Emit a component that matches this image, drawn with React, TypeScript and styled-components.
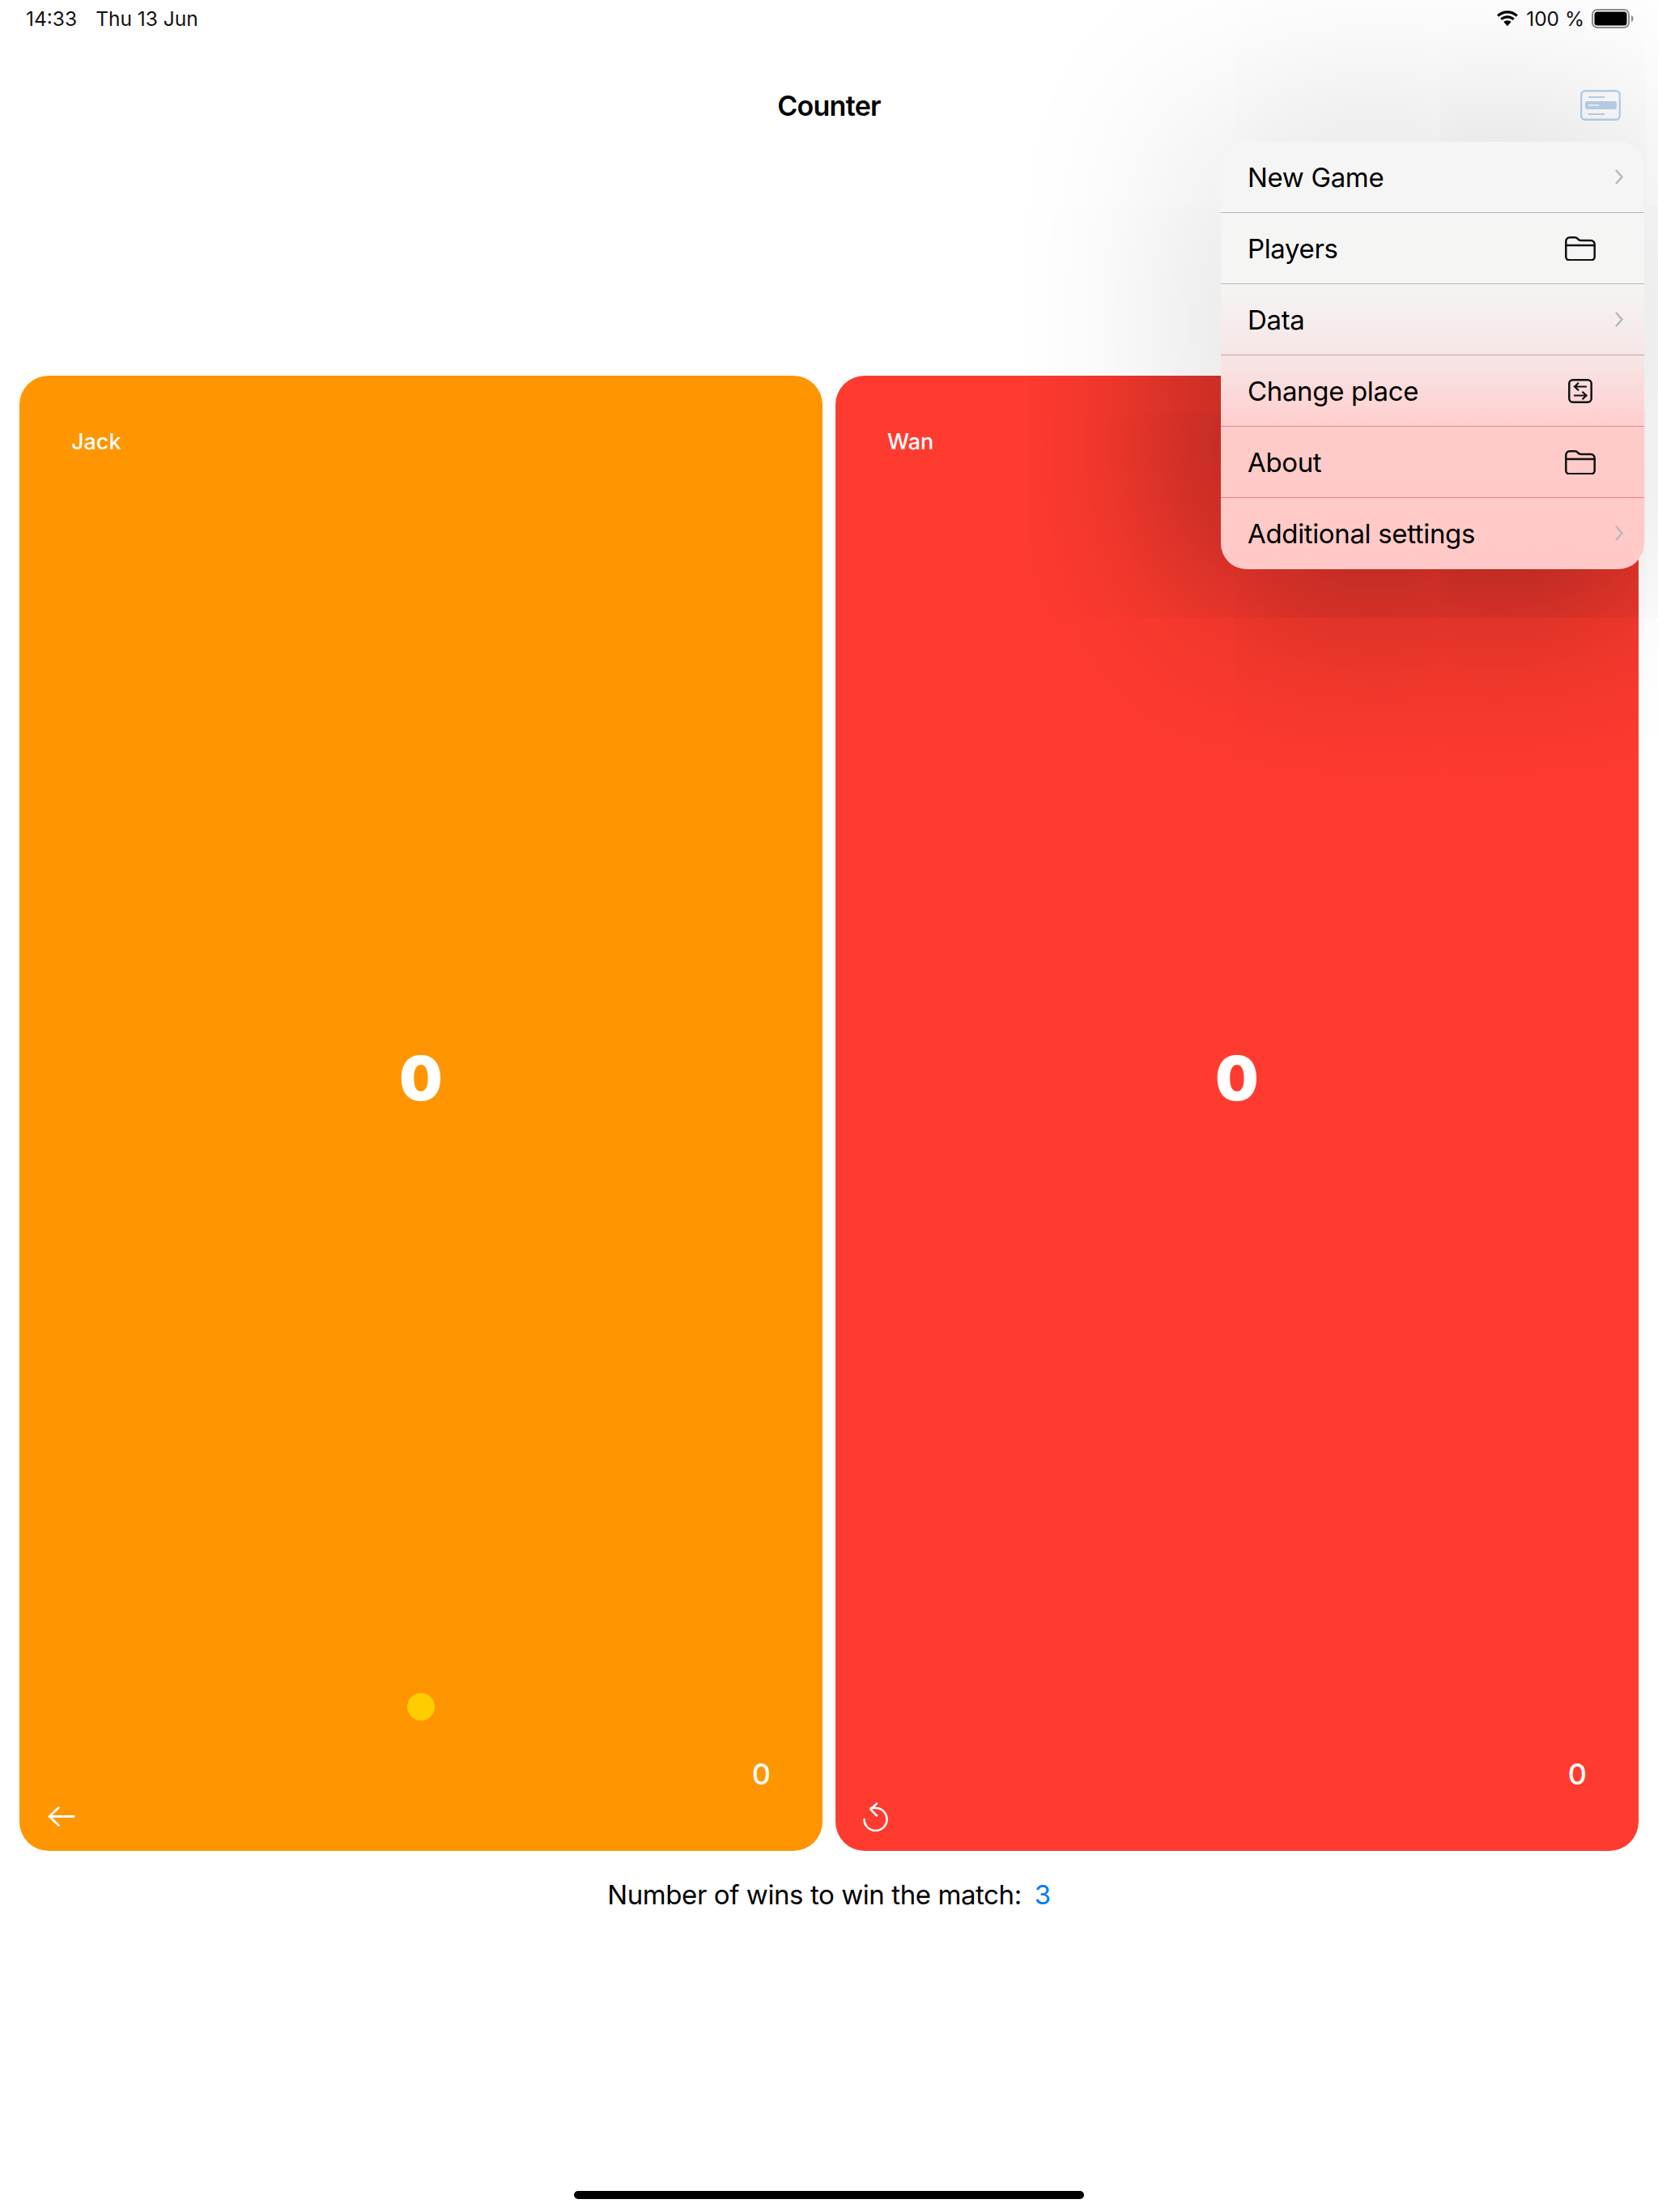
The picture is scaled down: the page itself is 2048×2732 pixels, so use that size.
import React from "react";
import styled, { createGlobalStyle } from "styled-components";

const GlobalStyle = createGlobalStyle`
  html, body {
    margin: 0;
    padding: 0;
    background: #fff;
  }
  body {
    font-family: "Inter", "Liberation Sans", sans-serif;
    color: #000;
  }
`;

const Page = styled.div`
  position: relative;
  width: 2048px;
  height: 2732px;
  display: flex;
  flex-direction: column;
  overflow: hidden;
`;

const StatusBar = styled.div`
  height: 46px;
  display: flex;
  align-items: center;
  justify-content: space-between;
  padding: 0 30px 0 32px;
  font-size: 24.5px;
  color: #111;
`;

const StatusGroup = styled.div<{ $gap: number }>`
  display: flex;
  align-items: center;
  gap: ${(p) => p.$gap}px;
`;

const NavBar = styled.div`
  height: 168px;
  margin-bottom: 250px;
  display: grid;
  grid-template-columns: minmax(0, 1fr) auto minmax(0, 1fr);
  align-items: center;
  padding: 0 46px;
`;

const Title = styled.div`
  grid-column: 2;
  font-size: 34px;
  font-weight: 600;
  letter-spacing: -0.7px;
`;

const NavAction = styled.div`
  grid-column: 3;
  display: flex;
  justify-content: flex-end;
`;

const Boards = styled.div`
  height: 1822px;
  padding: 0 24px;
  display: grid;
  grid-template-columns: 992px 992px;
  column-gap: 16px;
`;

const Card = styled.div<{ $color: string }>`
  position: relative;
  overflow: hidden;
  display: flex;
  flex-direction: column;
  border-radius: 36px;
  background: ${(p) => p.$color};
  color: #fff;
`;

// menu shadow falls harder on the red card than on the white page
const CardShade = styled.div`
  position: absolute;
  left: 476px;
  top: -289px;
  width: 523px;
  height: 528px;
  border-radius: 32px;
  box-shadow: 0 0 240px 20px rgba(0, 0, 0, 0.42);
`;

const PlayerName = styled.div`
  padding: 64px 0 0 64px;
  font-size: 27px;
  line-height: 36px;
  font-weight: 500;
`;

const ScoreArea = styled.div`
  flex: 1;
  padding-top: 7px;
  display: flex;
  align-items: center;
  justify-content: center;
  font-size: 75px;
  font-weight: 900;
`;

const Dot = styled.div<{ $visible?: boolean }>`
  align-self: center;
  width: 34px;
  height: 34px;
  border-radius: 50%;
  background: ${(p) => (p.$visible ? "#ffcc00" : "transparent")};
`;

const SetScore = styled.div`
  margin-top: 46px;
  padding-right: 64px;
  text-align: right;
  font-size: 36px;
  line-height: 40px;
  font-weight: 500;
`;

const CardFooter = styled.div`
  margin: 15px 0 24px;
  padding-left: 34px;
  height: 36px;
  display: flex;
`;

const Caption = styled.div`
  margin-top: 33px;
  display: flex;
  justify-content: center;
  gap: 16px;
  font-size: 33px;
  line-height: 42px;
  letter-spacing: -0.42px;
`;

const WinTarget = styled.span`
  color: #007aff;
`;

const HomeIndicator = styled.div`
  margin: auto auto 16px;
  width: 630px;
  height: 10px;
  border-radius: 5px;
  background: #000;
`;

const MenuShadow = styled.div`
  position: absolute;
  top: 175px;
  left: 1508px;
  width: 523px;
  height: 528px;
  border-radius: 32px;
  box-shadow: 0 0 240px 20px rgba(0, 0, 0, 0.17);
`;

const Menu = styled.div`
  position: absolute;
  top: 175px;
  left: 1508px;
  width: 523px;
  height: 528px;
  border-radius: 32px;
  overflow: hidden;
  background: linear-gradient(
    to bottom,
    #f5f5f5 0,
    #f5f5f4 170px,
    #f6e6e6 265px,
    #fdd4d3 330px,
    #ffcbc9 360px,
    #ffc9c7 100%
  );
`;

const MenuRow = styled.div<{ $line?: string }>`
  box-sizing: border-box;
  height: 88px;
  padding-left: 33px;
  display: flex;
  align-items: center;
  justify-content: space-between;
  border-bottom: 1px solid ${(p) => p.$line || "transparent"};
  font-size: 33px;
  letter-spacing: -0.35px;
  color: #000;
`;

const RowIcon = styled.div<{ $right: number }>`
  display: flex;
  margin-right: ${(p) => p.$right}px;
`;

const WifiIcon = () => (
  <svg width="28" height="20" viewBox="0 0 28 20" fill="#000">
    <path d="M14 3.4c4.1 0 7.9 1.600 10.700 4.300l2.200-2.300C23.500 2.100 19 .2 14 .2S4.500 2.100 1.100 5.400l2.200 2.300C6.100 5 9.900 3.400 14 3.400z" />
    <path d="M14 9.400c2.500 0 4.800.9 6.600 2.600l2.200-2.300C20.500 7.600 17.400 6.300 14 6.300S7.500 7.600 5.200 9.700L7.400 12c1.800-1.700 4.100-2.600 6.600-2.600z" />
    <path d="M14 12.300c-1.800 0-3.400.7-4.600 1.800l4.600 5.100 4.600-5.100c-1.200-1.100-2.800-1.800-4.600-1.800z" />
  </svg>
);

const BatteryIcon = () => (
  <svg width="52" height="24" viewBox="0 0 52 24">
    <rect x="1" y="1" width="45" height="22" rx="6" fill="none" stroke="#8e8e8e" strokeWidth="2" />
    <rect x="3.500" y="3.500" width="40" height="17" rx="3.500" fill="#000" />
    <path d="M49 8v8c1.600-.5 2.600-2.200 2.600-4S50.600 8.500 49 8z" fill="#8e8e8e" />
  </svg>
);

const SidebarIcon = () => (
  <svg width="50" height="38" viewBox="0 0 50 38">
    <rect x="1.200" y="1.200" width="47.600" height="35.600" rx="5" fill="none" stroke="#bcd4ee" strokeWidth="2.400" />
    <rect x="6" y="14" width="39" height="10" rx="2.500" fill="#bcd4ee" />
    <path d="M10 9h20M10 30h20" stroke="#bcd4ee" strokeWidth="2" />
    <path d="M10 19h13" stroke="#f4f4f4" strokeWidth="2" />
  </svg>
);

const FolderIcon = () => (
  <svg width="38" height="30" viewBox="0 0 38 30" fill="none" stroke="#111" strokeWidth="2.500">
    <path d="M1.300 6a4.700 4.700 0 0 1 4.700-4.700h6.500c1.700 0 2.500.8 3.500 1.900s1.800 1.900 3.500 1.900H32a4.700 4.700 0 0 1 4.700 4.700v15.500a4 4 0 0 1-4 4H5.300a4 4 0 0 1-4-4z" />
    <path d="M1.300 11h35.400" />
  </svg>
);

const SwapIcon = () => (
  <svg width="30" height="30" viewBox="0 0 30 30" fill="none" stroke="#111" strokeWidth="2.500">
    <rect x="1.300" y="1.300" width="27.400" height="27.400" rx="4.500" />
    <path d="M23 9.500H8M13 4.800L8 9.500l5 4.700M7 20.500h15.500M17.500 15.800l5 4.700-5 4.700" strokeWidth="2.200" />
  </svg>
);

const ChevronIcon = () => (
  <svg width="10" height="19" viewBox="0 0 10 19" fill="none" stroke="#b9b9b9" strokeWidth="2.600">
    <path d="M1 1l7.500 8.500L1 18" />
  </svg>
);

const BackIcon = () => (
  <svg width="36" height="36" viewBox="0 0 36 36" fill="none" stroke="#fff" strokeWidth="2.800" strokeLinecap="round" strokeLinejoin="round">
    <path d="M33 17.500H3M14.500 6.500L3 17.500l11.500 11" />
  </svg>
);

const RestartIcon = () => (
  <svg width="36" height="36" viewBox="0 0 36 36" fill="none" stroke="#fff" strokeWidth="2.600" strokeLinecap="round" strokeLinejoin="round">
    <path d="M1.500 21a14 14 0 1 0 14-14H10" />
    <path d="M17 1.500L9.500 8.800 17 16.500" />
  </svg>
);

const menuItems = [
  { label: "New Game", icon: <ChevronIcon />, right: 26, line: "#b8b8b8" },
  { label: "Players", icon: <FolderIcon />, right: 60, line: "#b8b8b8" },
  { label: "Data", icon: <ChevronIcon />, right: 26, line: "#c9a3a2" },
  { label: "Change place", icon: <SwapIcon />, right: 64, line: "#e88685" },
  { label: "About", icon: <FolderIcon />, right: 60, line: "#e88685" },
  { label: "Additional settings", icon: <ChevronIcon />, right: 26 },
];

export default function App() {
  return (
    <Page>
      <GlobalStyle />
      <StatusBar>
        <StatusGroup $gap={23}>
          <span>14:33</span>
          <span>Thu 13 Jun</span>
        </StatusGroup>
        <StatusGroup $gap={9}>
          <WifiIcon />
          <span>100 %</span>
          <BatteryIcon />
        </StatusGroup>
      </StatusBar>

      <NavBar>
        <Title>Counter</Title>
        <NavAction>
          <SidebarIcon />
        </NavAction>
      </NavBar>

      <Boards>
        <Card $color="#ff9500">
          <PlayerName>Jack</PlayerName>
          <ScoreArea>0</ScoreArea>
          <Dot $visible />
          <SetScore>0</SetScore>
          <CardFooter>
            <BackIcon />
          </CardFooter>
        </Card>
        <Card $color="#ff3b30">
          <CardShade />
          <PlayerName>Wan</PlayerName>
          <ScoreArea>0</ScoreArea>
          <Dot />
          <SetScore>0</SetScore>
          <CardFooter>
            <RestartIcon />
          </CardFooter>
        </Card>
      </Boards>

      <Caption>
        <span>Number of wins to win the match:</span>
        <WinTarget>3</WinTarget>
      </Caption>

      <HomeIndicator />

      <MenuShadow />
      <Menu>
        {menuItems.map((item) => (
          <MenuRow key={item.label} $line={item.line}>
            <span>{item.label}</span>
            <RowIcon $right={item.right}>{item.icon}</RowIcon>
          </MenuRow>
        ))}
      </Menu>
    </Page>
  );
}
